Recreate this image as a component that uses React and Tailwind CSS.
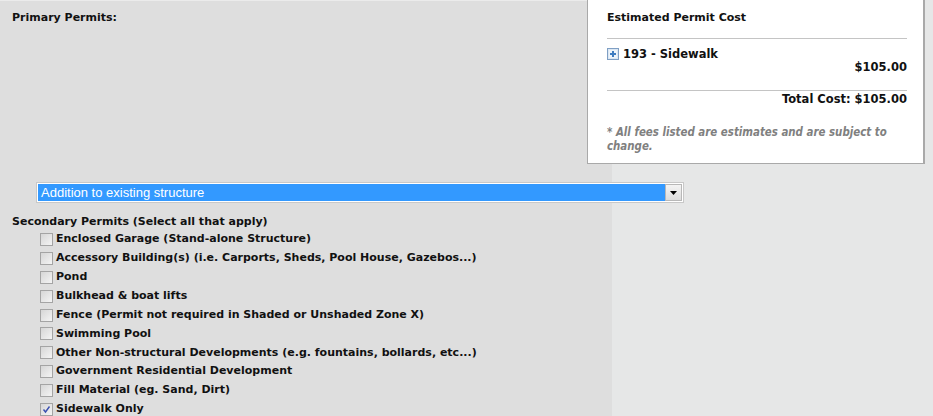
import React from "react";

const items = [
  ["Enclosed Garage (Stand-alone Structure)", false],
  ["Accessory Building(s) (i.e. Carports, Sheds, Pool House, Gazebos...)", false],
  ["Pond", false],
  ["Bulkhead & boat lifts", false],
  ["Fence (Permit not required in Shaded or Unshaded Zone X)", false],
  ["Swimming Pool", false],
  ["Other Non-structural Developments (e.g. fountains, bollards, etc...)", false],
  ["Government Residential Development", false],
  ["Fill Material (eg. Sand, Dirt)", false],
  ["Sidewalk Only", true],
];

function Checkbox({ checked }) {
  return (
    <div className="w-[13px] h-[13px] border border-[#a4a4a4] bg-[linear-gradient(135deg,#d6d6d6,#f4f4f4)] flex items-center justify-center shrink-0">
      {checked && (
        <svg width="9" height="9" viewBox="0 0 9 9">
          <path d="M1.5 4.5 L3.5 7 L7.5 1.5" fill="none" stroke="#3a4fb0" strokeWidth="1.4" />
        </svg>
      )}
    </div>
  );
}

function PlusIcon() {
  return (
    <svg width="12" height="12" viewBox="0 0 12 12" className="shrink-0">
      <rect x="0.5" y="0.5" width="11" height="11" fill="#dbe7f3" stroke="#7f9fc4" />
      <rect x="2" y="2" width="8" height="8" fill="#eef4fa" />
      <path d="M6 3 V9 M3 6 H9" stroke="#3f7cc0" strokeWidth="2" />
    </svg>
  );
}

export default function App() {
  return (
    <div className="w-[933px] h-[416px] overflow-hidden bg-[linear-gradient(to_right,#dedede_612px,#e6e7e7_612px)] font-['DejaVu_Sans',sans-serif] font-bold text-[#111] flex items-start">
      <div className="w-[587px] shrink-0 flex flex-col">
        <div className="h-px bg-[#ebebeb] w-[612px]" />
        <div className="pl-[12px] pt-[10px] text-[11px] leading-[13px]">Primary Permits:</div>
        <div className="h-[158px]" />
        <div className="ml-[36px] w-[648px] h-[21px] border border-[#c8c8c8] bg-white p-px flex">
          <div className="flex-1 bg-[#3399ff] text-white font-normal font-['Liberation_Sans',sans-serif] text-[13px] leading-[17px] pl-[3px]">
            Addition to existing structure
          </div>
          <div className="w-[17px] border border-[#b8b8b8] bg-[linear-gradient(#f4f4f4,#dcdcdc)] flex items-center justify-center">
            <svg width="7" height="4" viewBox="0 0 7 4"><path d="M0 0 H7 L3.5 4 Z" fill="#000" /></svg>
          </div>
        </div>
        <div className="pl-[12px] mt-[12px] text-[11px] leading-[13px]">Secondary Permits (Select all that apply)</div>
        <div className="flex flex-col mt-[2px]">
          {items.map(([label, checked]) => (
            <div key={label} className="h-[18.9px] pl-[40px] flex items-center gap-[3px] text-[11px] whitespace-nowrap">
              <Checkbox checked={checked} />
              <span>{label}</span>
            </div>
          ))}
        </div>
      </div>
      <div className="w-[338px] h-[164px] bg-white border border-t-0 border-[#a9a9a9] border-r-2 pl-[19px] pr-[16px] pt-[11px] flex flex-col">
        <div className="text-[11px] leading-[13px]">Estimated Permit Cost</div>
        <div className="h-px bg-[#c4c4c4] mt-[14px]" />
        <div className="mt-[8px] flex items-center gap-[4px] text-[11.5px] leading-[14px]">
          <PlusIcon />
          <span>193 - Sidewalk</span>
        </div>
        <div className="text-right text-[11.5px] leading-[14px] -mt-[1px]">$105.00</div>
        <div className="h-px bg-[#c4c4c4] mt-[16px]" />
        <div className="text-right text-[11.5px] leading-[14px] mt-[1px]">Total Cost: $105.00</div>
        <div className="mt-[19px] font-['DejaVu_Sans_Condensed','DejaVu_Sans',sans-serif] text-[11.4px] leading-[14px] italic text-[#808080]">
          * All fees listed are estimates and are subject to change.
        </div>
      </div>
    </div>
  );
}
